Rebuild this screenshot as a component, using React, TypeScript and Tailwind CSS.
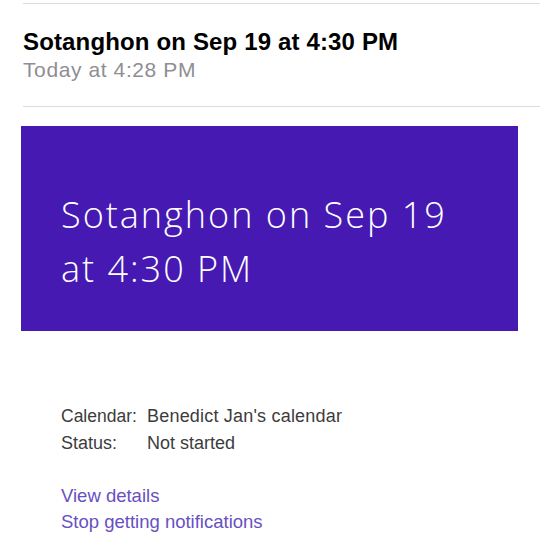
export default function App() {
  return (
    <div className="w-[540px] h-[540px] bg-white overflow-hidden" style={{ fontFamily: '"Liberation Sans", Arial, sans-serif' }}>
      <div className="ml-[23px] mt-[3px] border-t border-[#dcdcdc]" />
      <div className="pl-[23px] pt-[24px]">
        <div className="text-[24px] leading-[28px] font-bold text-black tracking-[0.15px]">Sotanghon on Sep 19 at 4:30 PM</div>
        <div className="text-[21px] leading-[26px] text-[#8e8e93] mt-[1px] tracking-[0.6px]">Today at 4:28 PM</div>
      </div>
      <div className="ml-[23px] mt-[23px] border-t border-[#dcdcdc]" />
      <div className="ml-[21px] mt-[19px] w-[497px] h-[205px] bg-[#4619b3] pl-[40px] pt-[62px]">
        <div className="text-white text-[36px] leading-[54px] font-light tracking-[2px]" style={{ fontFamily: '"Open Sans", "Liberation Sans", sans-serif' }}>
          Sotanghon on Sep 19
          <br />
          at 4:30 PM
        </div>
      </div>
      <div className="pl-[61px] pt-[72px] text-[18px] leading-[27px] text-[#3c3c3c]">
        <div className="flex"><span className="w-[86px] text-[17.5px]">Calendar:</span><span className="tracking-[0.2px]">Benedict Jan's calendar</span></div>
        <div className="flex"><span className="w-[86px]">Status:</span><span>Not started</span></div>
        <div className="mt-[26px] text-[#6750c2] text-[18.5px] leading-[26px]">
          <div>View details</div>
          <div>Stop getting notifications</div>
        </div>
      </div>
    </div>
  );
}
